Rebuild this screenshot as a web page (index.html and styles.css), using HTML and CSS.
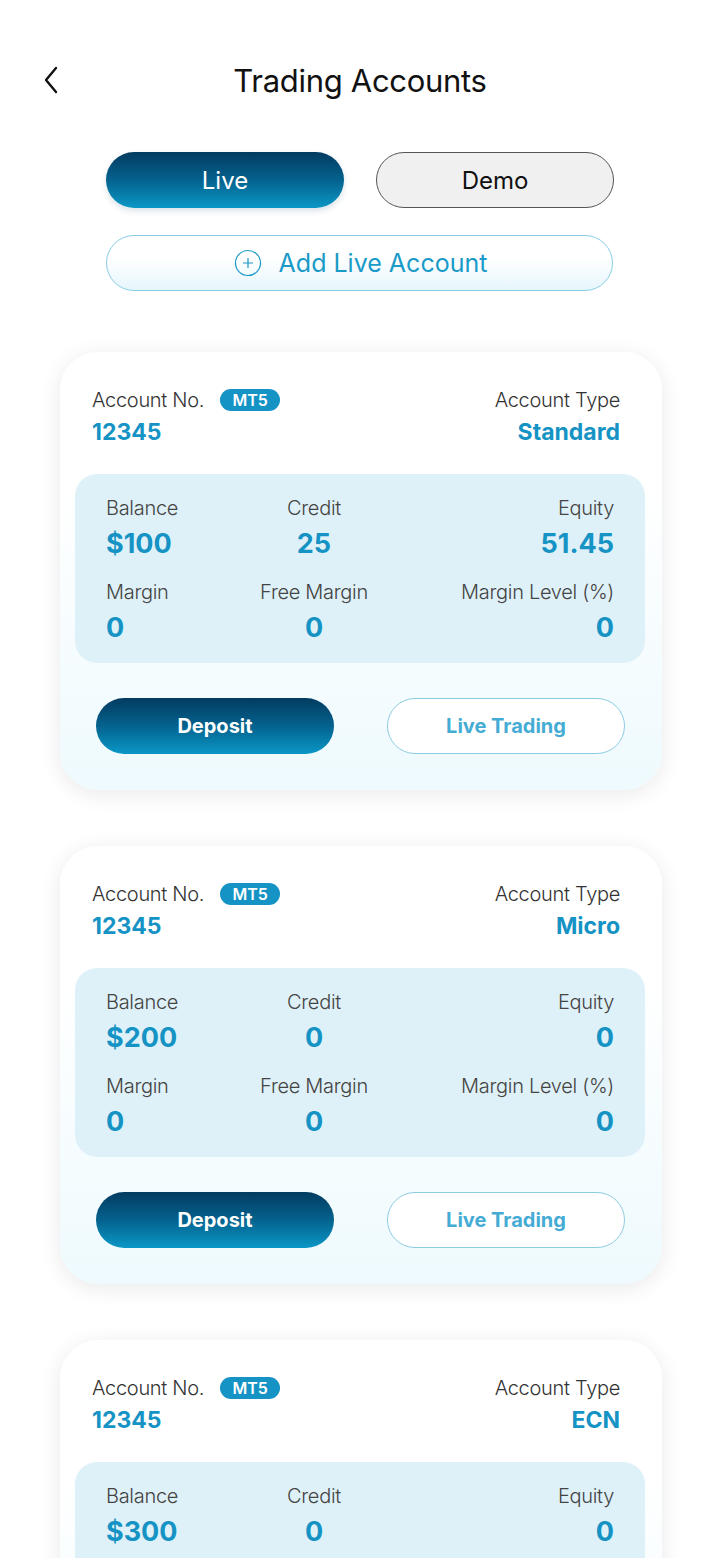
FILE: index.html
```html
<!DOCTYPE html>
<html lang="en">
<head>
  <meta charset="UTF-8">
  <meta name="viewport" content="width=device-width, initial-scale=1.0">
  <title>Trading Accounts</title>
  <link rel="stylesheet" href="styles.css">
</head>
<body>
  <header class="top-bar">
    <button class="back-btn" aria-label="Back">
      <svg width="16" height="28" viewBox="0 0 16 28"><path d="M13 2 L3 14 L13 26" fill="none" stroke="#111" stroke-width="2.4" stroke-linecap="round" stroke-linejoin="round"/></svg>
    </button>
    <h1>Trading Accounts</h1>
  </header>

  <div class="tabs">
    <button class="tab tab-active">Live</button>
    <button class="tab">Demo</button>
  </div>

  <button class="add-account">
    <svg width="28" height="28" viewBox="0 0 28 28"><circle cx="14" cy="14" r="12.5" fill="none" stroke="#1a9ac8" stroke-width="1.2"/><path d="M14 9 V19 M9 14 H19" stroke="#1a9ac8" stroke-width="1.2"/></svg>
    <span>Add Live Account</span>
  </button>

  <!-- account cards -->
  <div class="card">
    <div class="card-head">
      <div>
        <div class="label">Account No. <span class="badge">MT5</span></div>
        <div class="head-value">12345</div>
      </div>
      <div class="right">
        <div class="label">Account Type</div>
        <div class="head-value">Standard</div>
      </div>
    </div>
    <div class="stats">
      <div class="stat"><div class="label">Balance</div><div class="value">$100</div></div>
      <div class="stat mid"><div class="label">Credit</div><div class="value">25</div></div>
      <div class="stat right"><div class="label">Equity</div><div class="value">51.45</div></div>
      <div class="stat"><div class="label">Margin</div><div class="value">0</div></div>
      <div class="stat mid"><div class="label">Free Margin</div><div class="value">0</div></div>
      <div class="stat right"><div class="label">Margin Level (%)</div><div class="value">0</div></div>
    </div>
    <div class="actions">
      <button class="btn btn-fill">Deposit</button>
      <button class="btn btn-line">Live Trading</button>
    </div>
  </div>

  <div class="card">
    <div class="card-head">
      <div>
        <div class="label">Account No. <span class="badge">MT5</span></div>
        <div class="head-value">12345</div>
      </div>
      <div class="right">
        <div class="label">Account Type</div>
        <div class="head-value">Micro</div>
      </div>
    </div>
    <div class="stats">
      <div class="stat"><div class="label">Balance</div><div class="value">$200</div></div>
      <div class="stat mid"><div class="label">Credit</div><div class="value">0</div></div>
      <div class="stat right"><div class="label">Equity</div><div class="value">0</div></div>
      <div class="stat"><div class="label">Margin</div><div class="value">0</div></div>
      <div class="stat mid"><div class="label">Free Margin</div><div class="value">0</div></div>
      <div class="stat right"><div class="label">Margin Level (%)</div><div class="value">0</div></div>
    </div>
    <div class="actions">
      <button class="btn btn-fill">Deposit</button>
      <button class="btn btn-line">Live Trading</button>
    </div>
  </div>

  <div class="card">
    <div class="card-head">
      <div>
        <div class="label">Account No. <span class="badge">MT5</span></div>
        <div class="head-value">12345</div>
      </div>
      <div class="right">
        <div class="label">Account Type</div>
        <div class="head-value">ECN</div>
      </div>
    </div>
    <div class="stats">
      <div class="stat"><div class="label">Balance</div><div class="value">$300</div></div>
      <div class="stat mid"><div class="label">Credit</div><div class="value">0</div></div>
      <div class="stat right"><div class="label">Equity</div><div class="value">0</div></div>
      <div class="stat"><div class="label">Margin</div><div class="value">0</div></div>
      <div class="stat mid"><div class="label">Free Margin</div><div class="value">0</div></div>
      <div class="stat right"><div class="label">Margin Level (%)</div><div class="value">0</div></div>
    </div>
    <div class="actions">
      <button class="btn btn-fill">Deposit</button>
      <button class="btn btn-line">Live Trading</button>
    </div>
  </div>
</body>
</html>
```

FILE: styles.css
```css
body {
  margin: 0;
  background: #fff;
  font-family: Inter, "Noto Sans", sans-serif;
  color: #222;
}

button {
  font-family: inherit;
  cursor: pointer;
}

.top-bar {
  display: flex;
  align-items: center;
  justify-content: center;
  position: relative;
  height: 40px;
  margin-top: 60px;
}

.back-btn {
  position: absolute;
  left: 43px;
  top: 6px;
  border: 0;
  background: none;
  padding: 0;
}

.top-bar h1 {
  margin: 0;
  font-size: 31px;
  font-weight: 400;
  color: #111;
  letter-spacing: -0.3px;
}

.tabs {
  display: flex;
  gap: 32px;
  margin: 52px 0 0 106px;
}

.tab {
  width: 238px;
  height: 56px;
  border-radius: 28px;
  border: 1px solid #555;
  background: #f0f0f0;
  font-size: 24px;
  color: #111;
}

.tab-active {
  border: 0;
  color: #fff;
  background: linear-gradient(180deg, #033b60 0%, #04628e 50%, #0a97c6 100%);
  box-shadow: 0 3px 6px rgba(0, 60, 100, 0.15);
}

.add-account {
  display: flex;
  align-items: center;
  justify-content: center;
  gap: 17px;
  width: 507px;
  height: 56px;
  margin: 27px 0 0 106px;
  border: 1px solid #86cde6;
  border-radius: 28px;
  background: linear-gradient(180deg, #fff 40%, #e6f6fc 100%);
  color: #1a9ac8;
  font-size: 25px;
  font-weight: 400;
  padding-right: 4px;
}

.card {
  width: 602px;
  box-sizing: border-box;
  margin: 61px 0 0 60px;
  padding: 35px 42px 36px 15px;
  border-radius: 38px;
  background: linear-gradient(180deg, #fff 30%, #eefafe 100%);
  box-shadow: 0 4px 22px rgba(0, 0, 0, 0.09);
}

.card + .card {
  margin-top: 56px;
}

.card-head {
  display: flex;
  justify-content: space-between;
  padding-left: 17px;
  margin-bottom: 27px;
}

.label {
  font-size: 20px;
  line-height: 26px;
  font-weight: 300;
  color: #333;
  letter-spacing: -0.3px;
}

.badge {
  display: inline-block;
  margin-left: 11px;
  padding: 0 12px;
  height: 22px;
  line-height: 22px;
  border-radius: 11px;
  background: #1593c4;
  color: #fff;
  font-size: 16px;
  font-weight: 600;
  vertical-align: 1px;
  letter-spacing: 0;
}

.head-value {
  margin-top: 4px;
  font-size: 23px;
  line-height: 30px;
  font-weight: 700;
  color: #1593c4;
}

.right {
  text-align: right;
}

.stats {
  display: grid;
  grid-template-columns: 130px 156px 1fr;
  margin-right: -25px;
  padding: 21px 31px 17px 31px;
  border-radius: 22px;
  background: #dff1f8;
  row-gap: 17px;
}

.stat .label {
  color: #444;
}

.stat .value {
  margin-top: 5px;
  font-size: 27px;
  line-height: 36px;
  font-weight: 700;
  color: #1593c4;
}

.mid {
  text-align: center;
}

.actions {
  display: flex;
  justify-content: space-between;
  margin: 35px -5px 0 21px;
}

.btn {
  width: 238px;
  height: 56px;
  border-radius: 28px;
  font-size: 20px;
  font-weight: 700;
}

.btn-fill {
  border: 0;
  color: #fff;
  background: linear-gradient(180deg, #033b60 0%, #04628e 50%, #0a97c6 100%);
}

.btn-line {
  border: 1px solid #8ccbe2;
  background: #fff;
  color: #44acd4;
}
```
